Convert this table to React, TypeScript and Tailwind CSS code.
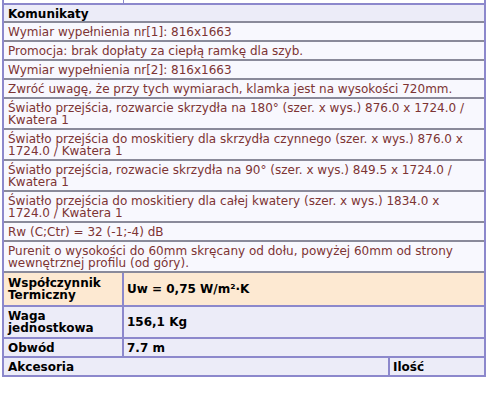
import React from "react";

const msgs: string[] = [
  "Wymiar wypełnienia nr[1]: 816x1663",
  "Promocja: brak dopłaty za ciepłą ramkę dla szyb.",
  "Wymiar wypełnienia nr[2]: 816x1663",
  "Zwróć uwagę, że przy tych wymiarach, klamka jest na wysokości 720mm.",
  "Światło przejścia, rozwarcie skrzydła na 180° (szer. x wys.) 876.0 x 1724.0 / Kwatera 1",
  "Światło przejścia do moskitiery dla skrzydła czynnego (szer. x wys.) 876.0 x 1724.0 / Kwatera 1",
  "Światło przejścia, rozwacie skrzydła na 90° (szer. x wys.) 849.5 x 1724.0 / Kwatera 1",
  "Światło przejścia do moskitiery dla całej kwatery (szer. x wys.) 1834.0 x 1724.0 / Kwatera 1",
  "Rw (C;Ctr) = 32 (-1;-4) dB",
  "Purenit o wysokości do 60mm skręcany od dołu, powyżej 60mm od strony wewnętrznej profilu (od góry).",
];

export default function App() {
  return (
    <div className="w-[504px] h-[395px] bg-white overflow-hidden text-[12px] leading-[12px]" style={{ fontFamily: '"DejaVu Sans", sans-serif' }}>
      <div className="ml-[2px] w-[484px] border-x-2 border-[#8c88cc] flex flex-col">
        <div className="flex h-[5px] border-b-2 border-[#8c88cc]">
          <div className="w-[120px] border-r border-[#8c88cc]" />
          <div className="flex-1" />
        </div>
        <div className="bg-[#ececf8] font-bold text-black px-[4px] pt-[3px] pb-[2px] h-[18px] border-b-2 border-[#8a8a9a]">
          Komunikaty
        </div>
        {msgs.map((m, i) => (
          <div key={i} className="bg-[#f8f8fe] text-[#7d3434] pl-[4px] pr-[5px] pt-[3px] pb-[2px] border-b-2 border-[#8a8a9a]">
            {m}
          </div>
        ))}
        <div className="flex bg-[#fde9d2] border-b-2 border-[#8c88cc] h-[34px]">
          <div className="w-[120px] font-bold px-[4px] flex items-center border-r-2 border-[#8c88cc]">Współczynnik Termiczny</div>
          <div className="flex-1 font-bold px-[3px] flex items-center">Uw = 0,75 W/m²·K</div>
        </div>
        <div className="flex bg-[#ececf8] border-b-2 border-[#8c88cc] h-[32px]">
          <div className="w-[120px] font-bold px-[4px] flex items-center border-r-2 border-[#8c88cc]">Waga jednostkowa</div>
          <div className="flex-1 font-bold px-[3px] flex items-center">156,1 Kg</div>
        </div>
        <div className="flex bg-[#ececf8] border-b-2 border-[#8c88cc] h-[19px]">
          <div className="w-[120px] font-bold px-[4px] flex items-center border-r-2 border-[#8c88cc]">Obwód</div>
          <div className="flex-1 font-bold px-[3px] flex items-center">7.7 m</div>
        </div>
        <div className="flex bg-[#ececf8] border-b-2 border-[#8c88cc] h-[19px]">
          <div className="flex-1 font-bold px-[4px] flex items-center border-r-2 border-[#8c88cc]">Akcesoria</div>
          <div className="w-[94px] font-bold px-[3px] flex items-center">Ilość</div>
        </div>
      </div>
    </div>
  );
}
